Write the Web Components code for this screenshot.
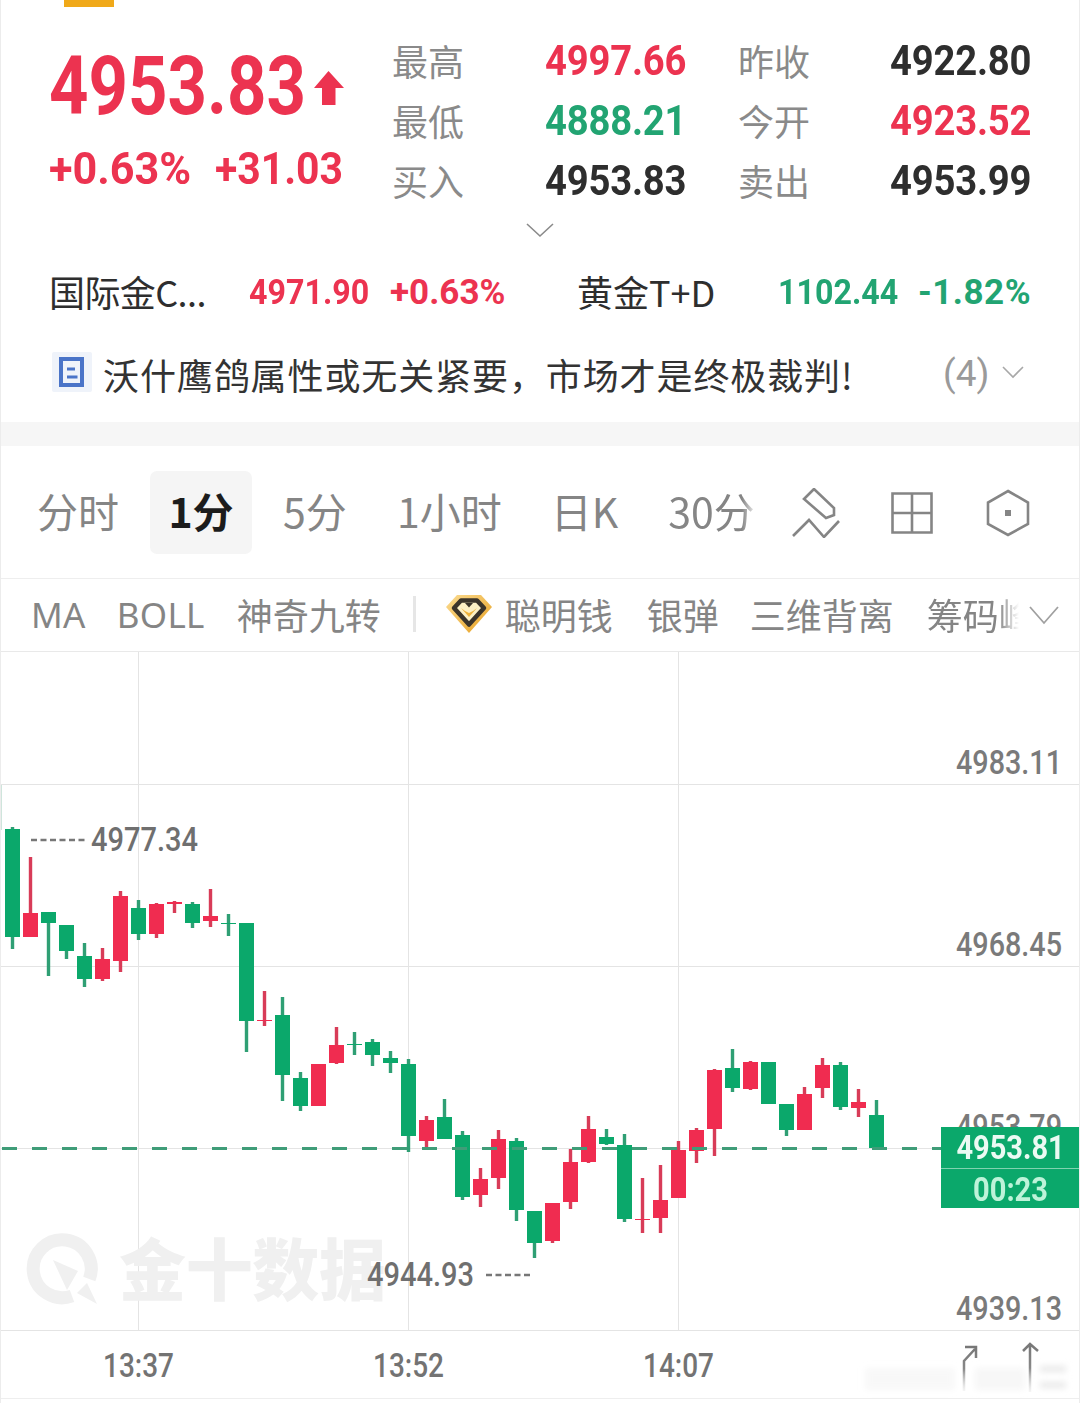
<!DOCTYPE html>
<html lang="zh">
<head>
<meta charset="utf-8">
<title>4953.83</title>
<style>
  html, body { margin: 0; background: #fff; }
  body { font-family: "Noto Sans CJK SC", "Noto Sans", sans-serif; }
  #page { width: 1080px; height: 1403px; overflow: hidden; box-sizing: border-box; border-left: 1px solid #ececec; border-right: 1px solid #ececec; }
</style>
</head>
<body>
<div id="page">
  <quote-summary></quote-summary>
  <related-quotes></related-quotes>
  <news-ticker count="(4)">沃什鹰鸽属性或无关紧要，市场才是终极裁判!</news-ticker>
  <period-tabs></period-tabs>
  <indicator-bar></indicator-bar>
  <kline-chart></kline-chart>
</div>

<script>
const CJK = `"Noto Sans CJK SC", "Noto Sans", sans-serif`
const NUM = `Roboto, "Liberation Sans", sans-serif`
const RED = "#ec3350"
const GREEN = "#22a472"
const DARK = "#2e2e2e"
const GRAY = "#8a8a8a"

function define(name, html) {
  /* Register a custom element whose shadow root just holds the given markup. */
  customElements.define(name, class extends HTMLElement {
    constructor() {
      super()
      this.attachShadow({ mode: "open" })
    }

    connectedCallback() {
      this.shadowRoot.innerHTML = typeof html === "function" ? html(this) : html
    }
  })
}

define("num-text", `
  <style>
    :host { display: inline-block; font-family: ${NUM}; font-weight: 700; white-space: nowrap; transform: scaleX(var(--sx, .92)); transform-origin: var(--origin, left center); }
  </style>
  <slot></slot>
`)

define("quote-summary", `
  <style>
    :host { display: block; height: 248px; }
    .mark { width: 50px; height: 7px; margin-left: 63px; background: #f0a919; }
    .main { display: flex; padding-top: 23px; }
    .left { width: 343px; padding-left: 48px; flex: none; }
    .price { display: flex; align-items: center; height: 58px; margin-top: 27px; color: ${RED}; }
    .price num-text { font-size: 81px; --sx: .85; }
    .price svg { margin: 4px 0 0 -38px; flex: none; }
    .change { display: flex; gap: 26px; margin-top: 28px; color: ${RED}; font-size: 44px; line-height: 52px; }
    .change num-text { --sx: .93; width: 140px; }
    .change num-text:first-child { --sx: .98; }
    .stats { display: grid; grid-template-columns: 100px 194px 52px 100px 193px; grid-auto-rows: 60px; align-items: center; font-family: ${CJK}; font-size: 36px; color: ${GRAY}; }
    .stats num-text { justify-self: end; font-size: 42px; --sx: .91; --origin: right center; letter-spacing: -.2px; }
    .chev { display: block; margin: 0 auto; padding-top: 12px; }
  </style>
  <div class="mark"></div>
  <div class="main">
    <div class="left">
      <div class="price">
        <num-text>4953.83</num-text>
        <svg width="32" height="36" viewBox="0 0 32 36"><path d="M15.500 1 31 18H22.500V35H9V18H1Z" fill="${RED}"/></svg>
      </div>
      <div class="change"><num-text>+0.63%</num-text><num-text>+31.03</num-text></div>
    </div>
    <div class="stats">
      <span>最高</span><num-text style="color:${RED}">4997.66</num-text><span></span>
      <span>昨收</span><num-text style="color:${DARK}">4922.80</num-text>
      <span>最低</span><num-text style="color:${GREEN}">4888.21</num-text><span></span>
      <span>今开</span><num-text style="color:${RED}">4923.52</num-text>
      <span>买入</span><num-text style="color:${DARK}">4953.83</num-text><span></span>
      <span>卖出</span><num-text style="color:${DARK}">4953.99</num-text>
    </div>
  </div>
  <svg class="chev" width="30" height="16" viewBox="0 0 30 16"><path d="M2 2 15 14 28 2" fill="none" stroke="#8a8a8a" stroke-width="1.600"/></svg>
`)

define("related-quotes", `
  <style>
    :host { display: flex; height: 88px; padding-left: 48px; align-items: center; font-family: ${CJK}; font-size: 36px; color: ${DARK}; white-space: nowrap; }
    num-text { font-size: 35px; --sx: .92; flex: none; }
    .name { width: 200px; flex: none; margin-bottom: 3px; letter-spacing: -.6px; }
    .gold { margin-left: 73px; width: 201px; flex: none; margin-bottom: 3px; }
    .r { color: ${RED}; }
    .g { color: ${GREEN}; }
    .v { width: 140px; }
    .p { --sx: 1; }
  </style>
  <span class="name">国际金C...</span>
  <num-text class="r" style="width:141px">4971.90</num-text>
  <num-text class="r p" style="width:114px">+0.63%</num-text>
  <span class="gold">黄金T+D</span>
  <num-text class="g v">1102.44</num-text>
  <num-text class="g p" style="letter-spacing:.5px">-1.82%</num-text>
`)

define("news-ticker", el => `
  <style>
    :host { display: flex; height: 86px; box-sizing: border-box; padding: 16px 0 30px 51px; align-items: center; font-family: ${CJK}; font-size: 36px; color: #333; white-space: nowrap; }
    svg.doc { flex: none; margin-right: 11px; }
    .title { flex: none; width: 840px; letter-spacing: .9px; margin-top: 3px; }
    .count { color: #9a9a9a; font-family: ${NUM}; font-size: 37px; margin-top: 3px; }
    svg.chev { margin-left: 12px; }
  </style>
  <svg class="doc" width="40" height="40" viewBox="0 0 40 40">
    <rect width="40" height="40" rx="2" fill="#eff3fa"/>
    <rect x="9" y="7" width="21" height="26" fill="none" stroke="#4a74c8" stroke-width="4"/>
    <rect x="15" y="15.500" width="8" height="3" fill="#4a74c8"/>
    <rect x="15" y="23.500" width="10.500" height="3" fill="#4a74c8"/>
  </svg>
  <span class="title"><slot></slot></span>
  <span class="count">${el.getAttribute("count") || ""}</span>
  <svg class="chev" width="24" height="14" viewBox="0 0 24 14"><path d="M2 2 12 12 22 2" fill="none" stroke="#a8a8a8" stroke-width="1.600"/></svg>
`)

define("period-tabs", `
  <style>
    :host { display: block; border-top: 24px solid #f6f6f6; border-bottom: 1px solid #eee; }
    .row { display: flex; height: 132px; padding-left: 16px; align-items: center; font-family: ${CJK}; font-size: 41px; color: #858585; white-space: nowrap; }
    .tab { flex: none; height: 83px; padding-bottom: 4px; box-sizing: border-box; display: flex; align-items: center; justify-content: center; }
    .on { border-radius: 7px; background: #f5f5f5; color: #1c1c1c; font-weight: 700; }
    .fade { -webkit-mask-image: linear-gradient(to right, #000 74%, transparent 86%); mask-image: linear-gradient(to right, #000 74%, transparent 86%); }
    svg { display: block; flex: none; fill: none; stroke: #858585; stroke-width: 2.600; margin-top: 2px; }
  </style>
  <div class="row">
    <span class="tab" style="width:122px">分时</span>
    <span class="tab on" style="width:102px;margin-left:11px">1分</span>
    <span class="tab" style="width:104px;margin-left:11px">5分</span>
    <span class="tab" style="width:145px;margin-left:10px">1小时</span>
    <span class="tab" style="width:105px;margin-left:10px">日K</span>
    <span class="tab fade" style="width:127px;margin-left:11px">30分</span>
    <svg style="margin-left:16px" width="50" height="50" viewBox="0 0 50 50"><path d="M23 1 13 11 35 30 43 27V20ZM2 48 18 32 33 49 48 33"/></svg>
    <svg style="margin-left:49px" width="44" height="44" viewBox="0 0 44 44"><path d="M2.500 2.500H41.500V41.500H2.500ZM22 2.500V41.500M2.500 22H41.500"/></svg>
    <svg style="margin-left:52px" width="44" height="48" viewBox="0 0 44 48"><path d="M22 2 42 13.500V35L22 46 2 35V13.500Z"/><rect x="19" y="21" width="6" height="6" fill="#858585" stroke="none"/></svg>
  </div>
`)

define("indicator-bar", `
  <style>
    :host { display: flex; height: 73px; box-sizing: border-box; border-bottom: 1px solid #e9e9e9; padding: 0 0 2px 30px; align-items: center; font-family: ${CJK}; font-size: 36px; color: #858585; white-space: nowrap; gap: 33px; }
    .latin { letter-spacing: .3px; font-family: "Noto Sans", sans-serif; font-size: 35px; }
    .sep { width: 3px; height: 36px; background: #e6e6e6; margin-left: -1px; }
    .smart { display: flex; align-items: center; gap: 13px; margin-left: -3px; }
    .fade { width: 92px; overflow: hidden; -webkit-mask-image: linear-gradient(to right, #000 72px, transparent 92px); mask-image: linear-gradient(to right, #000 72px, transparent 92px); }
    .chev { margin: 2px 0 0 -24px; flex: none; }
  </style>
  <span class="latin">MA</span>
  <span class="latin" style="margin-left:-2px">BOLL</span>
  <span style="margin-left:-1px">神奇九转</span>
  <span class="sep"></span>
  <span class="smart">
    <svg width="46" height="38" viewBox="0 0 46 38">
      <defs><linearGradient id="d" x1="0" y1="0" x2="1" y2="1"><stop offset="0" stop-color="#fbdc92"/><stop offset="1" stop-color="#e79f1f"/></linearGradient></defs>
      <path d="M11 0H35L46 12 23 38 0 12Z" fill="url(#d)"/>
      <path d="M8 13 15 5.500H31L38 13 23 29.500Z" fill="#fdf0c4" stroke="#3b342a" stroke-width="4.500" stroke-linejoin="round"/>
      <path d="M15 13 23 22 31 13 27 16 23 18 19 16Z" fill="#eeb23c"/>
      <path d="M19 8H27L23 12.500Z" fill="#3b342a"/>
    </svg>
    <span>聪明钱</span>
  </span>
  <span style="margin-left:1px">银弹</span>
  <span style="margin-left:-2px">三维背离</span>
  <span class="fade">筹码峰</span>
  <svg class="chev" width="32" height="20" viewBox="0 0 32 20"><path d="M2 2 16 18 30 2" fill="none" stroke="#a0a0a0" stroke-width="1.800"/></svg>
`)

// [high, bodyTop, bodyBottom, low, "g" | "r"] in page y; candles step 18px from x=12.
const CANDLES = [
  [827, 829, 937, 949, "g"], [857, 913, 937, 937, "r"], [912, 912, 923, 976, "g"], [925, 925, 951, 959, "g"],
  [943, 956, 979, 987, "g"], [948, 959, 979, 981, "r"], [891, 896, 961, 972, "r"], [900, 908, 934, 940, "g"],
  [903, 904, 934, 938, "r"], [901, 902, 904, 913, "r"], [902, 904, 923, 928, "g"], [889, 916, 921, 927, "r"],
  [914, 923, 924, 936, "g"], [923, 923, 1021, 1052, "g"], [991, 1020, 1021, 1026, "r"], [997, 1015, 1075, 1101, "g"],
  [1072, 1078, 1106, 1111, "g"], [1064, 1064, 1106, 1106, "r"], [1027, 1045, 1063, 1064, "r"], [1032, 1044, 1045, 1055, "g"],
  [1039, 1042, 1055, 1066, "g"], [1051, 1058, 1063, 1073, "g"], [1059, 1064, 1136, 1152, "g"], [1116, 1120, 1141, 1148, "r"],
  [1099, 1117, 1139, 1139, "g"], [1131, 1135, 1197, 1200, "g"], [1168, 1179, 1195, 1207, "r"], [1130, 1139, 1178, 1189, "r"],
  [1138, 1141, 1210, 1221, "g"], [1211, 1211, 1243, 1258, "g"], [1203, 1203, 1241, 1243, "r"], [1149, 1162, 1202, 1209, "r"],
  [1116, 1129, 1162, 1163, "r"], [1129, 1137, 1144, 1145, "g"], [1134, 1145, 1219, 1222, "g"], [1178, 1219, 1220, 1233, "r"],
  [1165, 1200, 1218, 1233, "r"], [1141, 1150, 1198, 1198, "r"], [1128, 1130, 1151, 1163, "r"], [1069, 1070, 1129, 1156, "r"],
  [1049, 1068, 1088, 1092, "g"], [1061, 1062, 1089, 1090, "r"], [1062, 1062, 1104, 1104, "g"], [1104, 1104, 1130, 1136, "g"],
  [1087, 1094, 1130, 1130, "r"], [1058, 1065, 1088, 1098, "r"], [1062, 1065, 1107, 1110, "g"], [1089, 1102, 1108, 1117, "r"],
  [1100, 1115, 1148, 1149, "g"],
]

function candlesSvg() {
  return CANDLES.map(([high, top, bottom, low, side], i) => {
    const x = 12.5 + 18 * i
    const fill = side === "g" ? "#0ba86b" : "#f02c50"
    const wick = side === "g" ? "#2f9f74" : "#d83c58"
    const h = Math.max(bottom - top, 1)
    return `<rect x="${x - 1.7}" y="${high}" width="3.400" height="${low - high}" fill="${wick}"/>` +
      `<rect x="${x - 7.5}" y="${top}" width="15" height="${h}" fill="${fill}"/>`
  }).join("")
}

define("kline-chart", `
  <style>
    :host { display: block; position: relative; height: 747px; }
    svg.plot { display: block; }
    .axis { font-family: ${NUM}; font-weight: 500; font-size: 33px; fill: #7a7a7a; }
    .tag { position: absolute; left: 940px; top: 475px; width: 139px; height: 81px; background: #0ba86b; display: grid; grid-template-rows: 42px 39px; text-align: center; font-size: 33px; line-height: 36px; }
    .tag div:first-child { border-bottom: 1px solid #7fd3b0; color: #ebfaf3; }
    .tag div:last-child { color: #bdf3d9; }
    .tag num-text { --sx: .88; --origin: center; }
  </style>
  <svg class="plot" width="1078" height="747" viewBox="1 652 1078 747">
    <defs>
      <linearGradient id="up" x1="0" y1="0" x2="0" y2="1"><stop offset="0" stop-color="#777"/><stop offset=".5" stop-color="#888"/><stop offset="1" stop-color="#ddd" stop-opacity=".3"/></linearGradient>
      <filter id="soft" x="-10%" y="-30%" width="120%" height="160%"><feGaussianBlur stdDeviation="3"/></filter>
    </defs>
    <g stroke="#e4e4e4" stroke-width="1" shape-rendering="crispEdges">
      <path d="M138.500 652V1330M408.500 652V1330M678.500 652V1330M1 784.500H1079M1 966.500H1079M1 1148.500H1079M1 1330.500H1079"/>
      <path d="M1 1398.500H1079" stroke="#eee"/>
      <path d="M1.500 785V830" stroke="#cfe5dc"/>
    </g>

    <g fill="#f0f0f0">
      <path d="M89.300 1279A29 29 0 1 0 72 1296" fill="none" stroke="#f0f0f0" stroke-width="13"/>
      <path d="M53 1260 78 1271 67 1290Z"/>
      <path d="M97 1304 77 1293 87 1283Z"/>
      <text x="119" y="1295" font-family='"Noto Sans CJK SC", sans-serif' font-weight="900" font-size="67" textLength="267">金十数据</text>
    </g>

    ${candlesSvg()}

    <path d="M2 1148.500H941" stroke="#3f9d78" stroke-width="3" stroke-dasharray="15 15"/>

    <g class="axis" text-anchor="end">
      <text x="1062" y="774" textLength="106" lengthAdjust="spacingAndGlyphs">4983.11</text>
      <text x="1062" y="956" textLength="106" lengthAdjust="spacingAndGlyphs">4968.45</text>
      <text x="1062" y="1138" textLength="106" lengthAdjust="spacingAndGlyphs">4953.79</text>
      <text x="1062" y="1320" textLength="106" lengthAdjust="spacingAndGlyphs">4939.13</text>
    </g>
    <g class="axis" style="fill:#6f6f6f">
      <text x="91" y="851" textLength="107" lengthAdjust="spacingAndGlyphs">4977.34</text>
      <text x="367" y="1286" textLength="107" lengthAdjust="spacingAndGlyphs">4944.93</text>
    </g>
    <path d="M31 840H86" stroke="#777" stroke-width="2.500" stroke-dasharray="6 3.500"/>
    <path d="M486 1275H530" stroke="#777" stroke-width="2.500" stroke-dasharray="6 3.500"/>

    <g class="axis" text-anchor="middle" style="fill:#737373">
      <text x="138.500" y="1377" textLength="71" lengthAdjust="spacingAndGlyphs">13:37</text>
      <text x="408.500" y="1377" textLength="71" lengthAdjust="spacingAndGlyphs">13:52</text>
      <text x="678.500" y="1377" textLength="71" lengthAdjust="spacingAndGlyphs">14:07</text>
    </g>

    <g filter="url(#soft)" fill="#f2f2f2">
      <rect x="865" y="1368" width="90" height="22" opacity=".5"/>
      <rect x="975" y="1368" width="50" height="22" opacity=".6"/>
      <path d="M1040 1366H1066V1372H1040ZM1040 1382H1066V1388H1040Z" fill="#e8e8e8"/>
    </g>
    <g fill="none" stroke="url(#up)" stroke-width="2.500">
      <path d="M964 1391V1361L975 1349M965 1347H976V1358"/>
      <path d="M1030 1392V1344M1023 1351 1030 1344 1038 1351"/>
    </g>
  </svg>
  <div class="tag">
    <div><num-text>4953.81</num-text></div>
    <div><num-text>00:23</num-text></div>
  </div>
`)
</script>
</body>
</html>
